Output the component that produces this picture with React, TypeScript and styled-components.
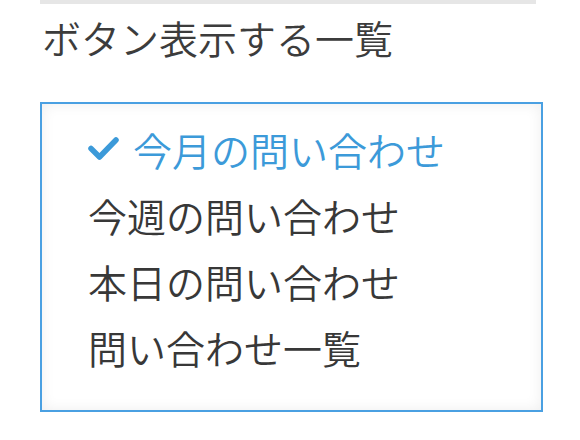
import React from "react";
import styled, { createGlobalStyle } from "styled-components";

const GlobalStyle = createGlobalStyle`
  html, body {
    margin: 0;
    padding: 0;
    background: #ffffff;
  }
  body {
    font-family: "Noto Sans CJK JP", "Noto Sans", sans-serif;
  }
`;

const Page = styled.div`
  width: 580px;
  height: 440px;
  padding: 0 37px 0 40px;
  box-sizing: border-box;
  overflow: hidden;
`;

const TopRule = styled.div`
  width: 496px;
  height: 4px;
  background: #e6e6e6;
`;

const Heading = styled.h2`
  margin: 10px 0 0 2px;
  font-size: 39px;
  line-height: 46px;
  font-weight: 350;
  color: #3c3c3c;
`;

const ListBox = styled.ul`
  list-style: none;
  margin: 42px 0 0;
  width: 503px;
  box-sizing: border-box;
  padding: 12px 0 30px 46px;
  border: 2px solid #4aa0e2;
  background: #ffffff;
  box-shadow: inset 0 0 14px rgba(0, 0, 0, 0.07);
`;

const Item = styled.li<{ $selected?: boolean }>`
  display: flex;
  align-items: center;
  gap: 14px;
  height: 66px;
  font-size: 39px;
  line-height: 66px;
  font-weight: 350;
  color: ${(p) => (p.$selected ? "#3c9ad9" : "#383838")};
`;

const Check = styled.svg`
  width: 31px;
  height: 25px;
  flex: none;
  margin-top: -2px;
`;

const items = [
  { label: "今月の問い合わせ", selected: true },
  { label: "今週の問い合わせ", selected: false },
  { label: "本日の問い合わせ", selected: false },
  { label: "問い合わせ一覧", selected: false },
];

const App = () => {
  return (
    <>
      <GlobalStyle />
      <Page>
        <TopRule />
        <Heading>ボタン表示する一覧</Heading>
        <ListBox>
          {items.map((item) => (
            <Item key={item.label} $selected={item.selected}>
              {item.selected && (
                <Check viewBox="0 0 31 25">
                  <polyline
                    points="3,12.5 11.5,21 28,4"
                    fill="none"
                    stroke="#3c9ad9"
                    strokeWidth="5.5"
                    strokeLinecap="round"
                    strokeLinejoin="round"
                  />
                </Check>
              )}
              <span>{item.label}</span>
            </Item>
          ))}
        </ListBox>
      </Page>
    </>
  );
};

export default App;
